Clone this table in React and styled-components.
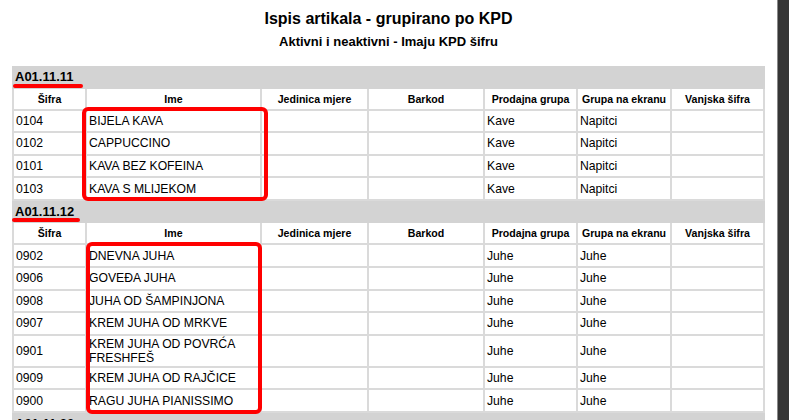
import React from "react";
import styled, { createGlobalStyle } from "styled-components";

const Global = createGlobalStyle`
  html, body { margin: 0; padding: 0; height: 420px; overflow: hidden; background: #ffffff; }
  body { font-family: "Liberation Sans", Arial, sans-serif; color: #000; }
`;

const Viewer = styled.div`
  display: flex;
  width: 789px;
  height: 420px;
  overflow: hidden;
`;

const Sheet = styled.div`
  width: 777px;
  flex: none;
  background: #ffffff;
  padding: 10px 12px 0;
  box-sizing: border-box;
  display: flex;
  flex-direction: column;
`;

const Backdrop = styled.div`
  flex: 1;
  background: #353535;
  border-left: 1px solid #8a8a8a;
`;

const Title = styled.h1`
  margin: 0;
  font-size: 16px;
  line-height: 18px;
  font-weight: bold;
  text-align: center;
`;

const Subtitle = styled.h2`
  margin: 6px 0 0;
  font-size: 13px;
  line-height: 16px;
  font-weight: bold;
  text-align: center;
`;

const TableWrap = styled.div`
  position: relative;
  margin-top: 16px;
  width: 753px;
`;

const ReportTable = styled.table`
  width: 753px;
  table-layout: fixed;
  border-collapse: separate;
  border-spacing: 0;
`;

const cellBase = `
  box-sizing: border-box;
  border-right: 2px solid #dadada;
  border-bottom: 2px solid #dadada;
  vertical-align: middle;
  padding: 1px 2px;
  line-height: 14px;
  overflow: hidden;
  &:first-child { border-left: 2px solid #dadada; }
`;

const GroupCell = styled.td`
  box-sizing: border-box;
  height: 22.5px;
  background: #d3d3d3;
  border-bottom: 2px solid #d3d3d3;
  padding: 2px 3px 0;
  font-size: 13px;
  font-weight: bold;
  line-height: 14px;
  vertical-align: middle;
`;

const HeadCell = styled.th`
  ${cellBase}
  height: 22px;
  font-size: 10.6px;
  font-weight: bold;
  text-align: center;
  white-space: nowrap;
`;

const Cell = styled.td`
  ${cellBase}
  height: ${(p) => (p.$tall ? "32px" : "22.6px")};
  font-size: 12.2px;
  text-align: left;
`;

const Underline = styled.div`
  position: absolute;
  left: ${(p) => p.$x}px;
  top: ${(p) => p.$y}px;
  width: ${(p) => p.$w}px;
  height: 3.5px;
  background: #ff0000;
  border-radius: 2px;
  pointer-events: none;
`;

const Highlight = styled.div`
  position: absolute;
  left: ${(p) => p.$x}px;
  top: ${(p) => p.$y}px;
  width: ${(p) => p.$w}px;
  height: ${(p) => p.$h}px;
  border: 4px solid #ff0000;
  border-radius: 6px;
  box-sizing: border-box;
  pointer-events: none;
`;

const columns = [
  { label: "Šifra", width: 75 },
  { label: "Ime", width: 175 },
  { label: "Jedinica mjere", width: 107 },
  { label: "Barkod", width: 116 },
  { label: "Prodajna grupa", width: 93 },
  { label: "Grupa na ekranu", width: 94 },
  { label: "Vanjska šifra", width: 93 },
];

const groups = [
  {
    code: "A01.11.11",
    rows: [
      ["0104", "BIJELA KAVA", "Kave", "Napitci"],
      ["0102", "CAPPUCCINO", "Kave", "Napitci"],
      ["0101", "KAVA BEZ KOFEINA", "Kave", "Napitci"],
      ["0103", "KAVA S MLIJEKOM", "Kave", "Napitci"],
    ],
  },
  {
    code: "A01.11.12",
    rows: [
      ["0902", "DNEVNA JUHA", "Juhe", "Juhe"],
      ["0906", "GOVEĐA JUHA", "Juhe", "Juhe"],
      ["0908", "JUHA OD ŠAMPINJONA", "Juhe", "Juhe"],
      ["0907", "KREM JUHA OD MRKVE", "Juhe", "Juhe"],
      ["0901", "KREM JUHA OD POVRĆA FRESHFEŠ", "Juhe", "Juhe", true],
      ["0909", "KREM JUHA OD RAJČICE", "Juhe", "Juhe"],
      ["0900", "RAGU JUHA PIANISSIMO", "Juhe", "Juhe"],
    ],
  },
  {
    code: "A01.11.20",
    rows: [],
  },
];

export default function App() {
  return (
    <>
      <Global />
      <Viewer>
        <Sheet>
          <Title>Ispis artikala - grupirano po KPD</Title>
          <Subtitle>Aktivni i neaktivni - Imaju KPD šifru</Subtitle>
          <TableWrap>
            <ReportTable>
              <colgroup>
                {columns.map((c) => (
                  <col key={c.label} style={{ width: c.width }} />
                ))}
              </colgroup>
              {groups.map((g) => (
                <tbody key={g.code}>
                  <tr>
                    <GroupCell colSpan={7}>{g.code}</GroupCell>
                  </tr>
                  {g.rows.length > 0 && (
                    <tr>
                      {columns.map((c) => (
                        <HeadCell key={c.label}>{c.label}</HeadCell>
                      ))}
                    </tr>
                  )}
                  {g.rows.map(([sifra, ime, prodajna, ekran, tall]) => (
                    <tr key={sifra}>
                      <Cell $tall={tall}>{sifra}</Cell>
                      <Cell $tall={tall}>{ime}</Cell>
                      <Cell $tall={tall}></Cell>
                      <Cell $tall={tall}></Cell>
                      <Cell $tall={tall}>{prodajna}</Cell>
                      <Cell $tall={tall}>{ekran}</Cell>
                      <Cell $tall={tall}></Cell>
                    </tr>
                  ))}
                </tbody>
              ))}
            </ReportTable>
            <Underline $x={1} $y={18} $w={70} />
            <Highlight $x={70} $y={41} $w={186} $h={94} />
            <Underline $x={0} $y={152} $w={68} />
            <Highlight $x={74} $y={176} $w={176} $h={172} />
          </TableWrap>
        </Sheet>
        <Backdrop />
      </Viewer>
    </>
  );
}
